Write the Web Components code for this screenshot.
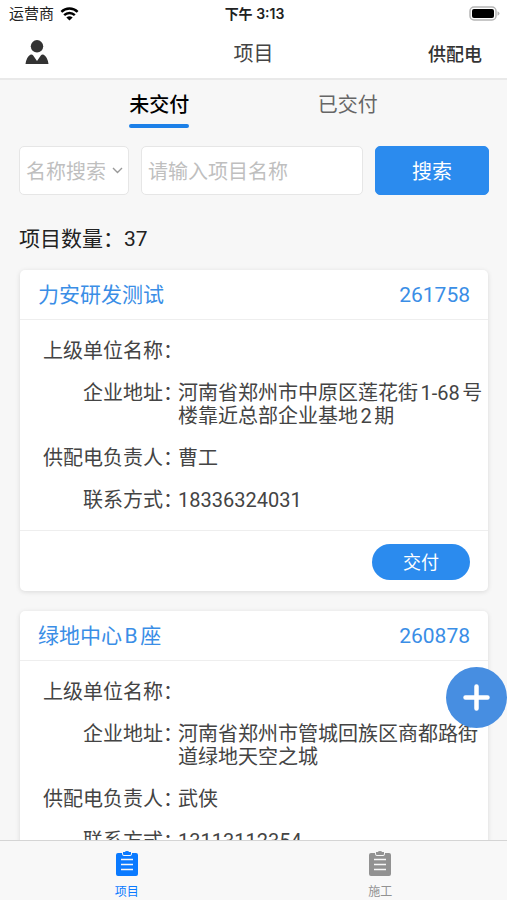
<!DOCTYPE html>
<html lang="zh-CN">
<head>
<meta charset="utf-8">
<meta name="viewport" content="width=device-width, initial-scale=1">
<title>项目</title>
<style>
  body {
    margin: 0;
    font-family: Roboto, "Noto Sans CJK SC", sans-serif;
    font-size: 20px;
    line-height: 23px;
    color: #444;
    background: #f7f7f7;
    text-autospace: normal;
  }
</style>
</head>
<body>
<project-app>
  <status-bar slot="top" carrier="运营商" time="下午 3:13"></status-bar>
  <nav-bar slot="top" action="供配电">项目</nav-bar>

  <view-tabs>
    <view-tab active>未交付</view-tab>
    <view-tab>已交付</view-tab>
  </view-tabs>
  <search-form></search-form>
  <project-count value="37">项目数量：</project-count>
  <project-card name="力安研发测试" number="261758">
    <info-row label="上级单位名称："></info-row>
    <info-row label="企业地址：">河南省郑州市中原区莲花街1-68号楼靠近总部企业基地2期</info-row>
    <info-row label="供配电负责人：">曹工</info-row>
    <info-row label="联系方式：">18336324031</info-row>
  </project-card>
  <project-card name="绿地中心B座" number="260878">
    <info-row label="上级单位名称："></info-row>
    <info-row label="企业地址：">河南省郑州市管城回族区商都路街道绿地天空之城</info-row>
    <info-row label="供配电负责人：">武侠</info-row>
    <info-row label="联系方式：">13113112354</info-row>
  </project-card>

  <add-button slot="overlay"></add-button>
  <bottom-bar slot="bottom">
    <bottom-item active>项目</bottom-item>
    <bottom-item>施工</bottom-item>
  </bottom-bar>
</project-app>

<script>
// Small helper: render a string into an open shadow root
class BaseElement extends HTMLElement {
  constructor() {
    super();
    this.attachShadow({mode: 'open'});
  }
  connectedCallback() {
    const template = document.createElement('template');
    template.innerHTML = this.render();
    this.shadowRoot.appendChild(template.content.cloneNode(true));
  }
}

class ProjectApp extends BaseElement {
  render() {
    return `
      <style>
        :host {
          display: flex;
          flex-direction: column;
          height: 100vh;
        }
        main {
          flex: 1;
          min-height: 0;
          overflow-y: auto;
          scrollbar-width: none;
        }
      </style>
      <slot name="top"></slot>
      <main><slot></slot></main>
      <slot name="overlay"></slot>
      <slot name="bottom"></slot>`;
  }
}

class StatusBar extends BaseElement {
  render() {
    return `
      <style>
        :host {
          display: grid;
          grid-template-columns: 1fr auto 1fr;
          align-items: center;
          height: 27px;
          padding: 0 7px 0 9px;
          background: #fff;
          color: #222;
          font-size: 14px;
          font-family: Inter, "Noto Sans CJK SC", sans-serif;
        }
        .carrier {
          display: flex;
          align-items: center;
          gap: 6px;
          font-size: 15px;
        }
        .time { font-weight: 600; }
        .battery { justify-self: end; }
        svg { display: block; }
      </style>
      <span class="carrier">${this.getAttribute('carrier')}
        <svg width="19" height="14" viewBox="0 0 20 15" fill="none" stroke="#000" stroke-width="2.6">
          <path d="M1.3 5.2C6.2.4 13.8.4 18.7 5.2"/>
          <path d="M4.3 8.8C7.5 5.7 12.5 5.7 15.7 8.8"/>
          <path d="M10 14.5 6.6 11.2Q10 8.6 13.4 11.2Z" fill="#000" stroke="none"/>
        </svg>
      </span>
      <span class="time">${this.getAttribute('time')}</span>
      <svg class="battery" width="31" height="15" viewBox="0 0 31 15">
        <rect x="1" y="1" width="26" height="13" rx="4" fill="#fff" stroke="#b5b5b5" stroke-width="1.5"/>
        <rect x="3" y="3" width="22" height="9" rx="2" fill="#000"/>
        <path d="M28.5 5.2Q30.5 6 30.5 7.5T28.5 9.8Z" fill="#b5b5b5"/>
      </svg>`;
  }
}

class NavBar extends BaseElement {
  render() {
    return `
      <style>
        :host {
          display: grid;
          grid-template-columns: 1fr auto 1fr;
          align-items: center;
          height: 51px;
          padding: 0 25px;
          background: #fff;
          border-bottom: 2px solid #e9e9e9;
        }
        h1 {
          margin: 0;
          padding-top: 3px;
          font-size: 20px;
          font-weight: 400;
        }
        button {
          padding: 0;
          border: 0;
          background: none;
          color: #333;
          font: 500 18px/23px Roboto, "Noto Sans CJK SC", sans-serif;
        }
        .user { justify-self: start; }
        .action {
          justify-self: end;
          padding-top: 3px;
        }
        svg { display: block; }
      </style>
      <button class="user" aria-label="user">
        <svg width="24" height="25" viewBox="0 0 24 25" fill="#333">
          <circle cx="12" cy="6.300" r="6.200"/>
          <path d="M.5 24Q1.500 17 5.200 14.800Q7 13.800 8.200 15.500L12 21 15.800 15.500Q17 13.800 18.800 14.800Q22.500 17 23.500 24Z"/>
        </svg>
      </button>
      <h1><slot></slot></h1>
      <button class="action">${this.getAttribute('action')}</button>`;
  }
}

class ViewTabs extends BaseElement {
  render() {
    return `
      <style>
        :host {
          display: flex;
          padding: 14px 65px 0;
        }
      </style>
      <slot></slot>`;
  }
}

class ViewTab extends BaseElement {
  render() {
    return `
      <style>
        :host {
          flex: 1;
          display: flex;
          justify-content: center;
        }
        button {
          padding: 0;
          border: 0;
          background: none;
          color: #666;
          font: inherit;
        }
        button::after {
          content: "";
          display: block;
          height: 4px;
          margin-top: 7px;
          border-radius: 2px;
        }
        :host([active]) button {
          color: #000;
          font-weight: 500;
        }
        :host([active]) button::after { background: #1c80e8; }
      </style>
      <button><slot></slot></button>`;
  }
}

class SearchForm extends BaseElement {
  render() {
    return `
      <style>
        :host { display: block; }
        form {
          display: grid;
          grid-template-columns: 110px 1fr 114px;
          gap: 12px;
          padding: 18px 18px 0 19px;
        }
        .select {
          display: grid;
          align-items: center;
        }
        .select > * { grid-area: 1 / 1; }
        svg {
          justify-self: end;
          margin-right: 6px;
          pointer-events: none;
        }
        select, input, button {
          box-sizing: border-box;
          width: 100%;
          height: 49px;
          margin: 0;
          padding: 3px 6px 0;
          border: 1px solid #e6e6e6;
          border-radius: 5px;
          background: #fff;
          color: #bfbfbf;
          font: inherit;
        }
        select { appearance: none; }
        input::placeholder { color: #bfbfbf; }
        button {
          border-color: #2b8bee;
          background: #2b8bee;
          color: #fff;
        }
      </style>
      <form onsubmit="return false">
        <div class="select">
          <select aria-label="搜索方式"><option>名称搜索</option></select>
          <svg width="11" height="7" viewBox="0 0 11 7" fill="none" stroke="#999" stroke-width="1.4"><path d="M1 1 5.500 5.500 10 1"/></svg>
        </div>
        <input type="text" aria-label="项目名称" placeholder="请输入项目名称">
        <button>搜索</button>
      </form>`;
  }
}

class ProjectCount extends BaseElement {
  render() {
    return `
      <style>
        :host {
          display: block;
          padding: 33px 19px 19px;
          color: #222;
          font-size: 21px;
          text-autospace: no-autospace;
        }
      </style>
      <slot></slot>${this.getAttribute('value')}`;
  }
}

class ProjectCard extends BaseElement {
  render() {
    return `
      <style>
        :host {
          display: block;
          margin: 0 19px 20px 20px;
          border-radius: 5px;
          background: #fff;
          box-shadow: 0 1px 5px rgba(0, 0, 0, .12);
        }
        header {
          display: flex;
          justify-content: space-between;
          padding: 14px 18px 12px;
          border-bottom: 1px solid #eee;
          color: #3a8ee6;
          font-size: 21px;
        }
        h2 {
          margin: 0;
          font: inherit;
        }
        .rows {
          display: grid;
          gap: 19px;
          padding: 20px 0 18px 23px;
        }
        footer {
          display: flex;
          justify-content: flex-end;
          padding: 13px 18px 11px;
          border-top: 1px solid #eee;
        }
        button {
          width: 98px;
          height: 36px;
          padding: 0;
          border: 0;
          border-radius: 18px;
          background: #2b8bee;
          color: #fff;
          font: inherit;
          font-size: 18px;
        }
      </style>
      <header>
        <h2>${this.getAttribute('name')}</h2>
        <span>${this.getAttribute('number')}</span>
      </header>
      <div class="rows"><slot></slot></div>
      <footer><button>交付</button></footer>`;
  }
}

class InfoRow extends BaseElement {
  render() {
    return `
      <style>
        :host {
          display: grid;
          grid-template-columns: 130px 1fr;
          gap: 5px;
        }
        /* colon takes half an em here */
        .label {
          justify-self: end;
          white-space: nowrap;
          font-feature-settings: "halt";
        }
      </style>
      <span class="label">${this.getAttribute('label')}</span>
      <span><slot></slot></span>`;
  }
}

class AddButton extends BaseElement {
  render() {
    return `
      <style>
        :host {
          position: fixed;
          right: 0;
          bottom: 172px;
        }
        button {
          display: grid;
          place-items: center;
          width: 61px;
          height: 61px;
          padding: 0;
          border: 0;
          border-radius: 50%;
          background: #478ee1;
        }
      </style>
      <button aria-label="add">
        <svg width="27" height="27" viewBox="0 0 27 27" stroke="#fff" stroke-width="4.5" stroke-linecap="round"><path d="M13.500 2.500V24.500M2.500 13.500H24.500"/></svg>
      </button>`;
  }
}

class BottomBar extends BaseElement {
  render() {
    return `
      <style>
        :host {
          display: flex;
          border-top: 1px solid #d5d5d5;
          background: #f8f8f8;
        }
      </style>
      <slot></slot>`;
  }
}

class BottomItem extends BaseElement {
  render() {
    return `
      <style>
        :host {
          flex: 1;
          color: #929292;
        }
        :host([active]) { color: #0a7aff; }
        a {
          display: flex;
          flex-direction: column;
          align-items: center;
          gap: 8px;
          padding: 10px 0 0;
          color: inherit;
          font-size: 12px;
          line-height: 16px;
          text-decoration: none;
        }
      </style>
      <a href="#">
        <svg width="22" height="25" viewBox="0 0 22 25">
          <path d="M2 2H6Q6 5 8 5H14Q16 5 16 2H20Q22 2 22 4V23Q22 25 20 25H2Q0 25 0 23V4Q0 2 2 2Z" fill="currentColor"/>
          <path d="M7 1H8.800Q9.300 0 11 0T13.200 1H15V3Q15 4 14 4H8Q7 4 7 3Z" fill="currentColor"/>
          <path d="M5 8.500H17M5 13.500H17M5 18.500H17" stroke="#f8f8f8" stroke-width="1.5"/>
        </svg>
        <slot></slot>
      </a>`;
  }
}

customElements.define('project-app', ProjectApp);
customElements.define('status-bar', StatusBar);
customElements.define('nav-bar', NavBar);
customElements.define('view-tabs', ViewTabs);
customElements.define('view-tab', ViewTab);
customElements.define('search-form', SearchForm);
customElements.define('project-count', ProjectCount);
customElements.define('project-card', ProjectCard);
customElements.define('info-row', InfoRow);
customElements.define('add-button', AddButton);
customElements.define('bottom-bar', BottomBar);
customElements.define('bottom-item', BottomItem);
</script>
</body>
</html>
